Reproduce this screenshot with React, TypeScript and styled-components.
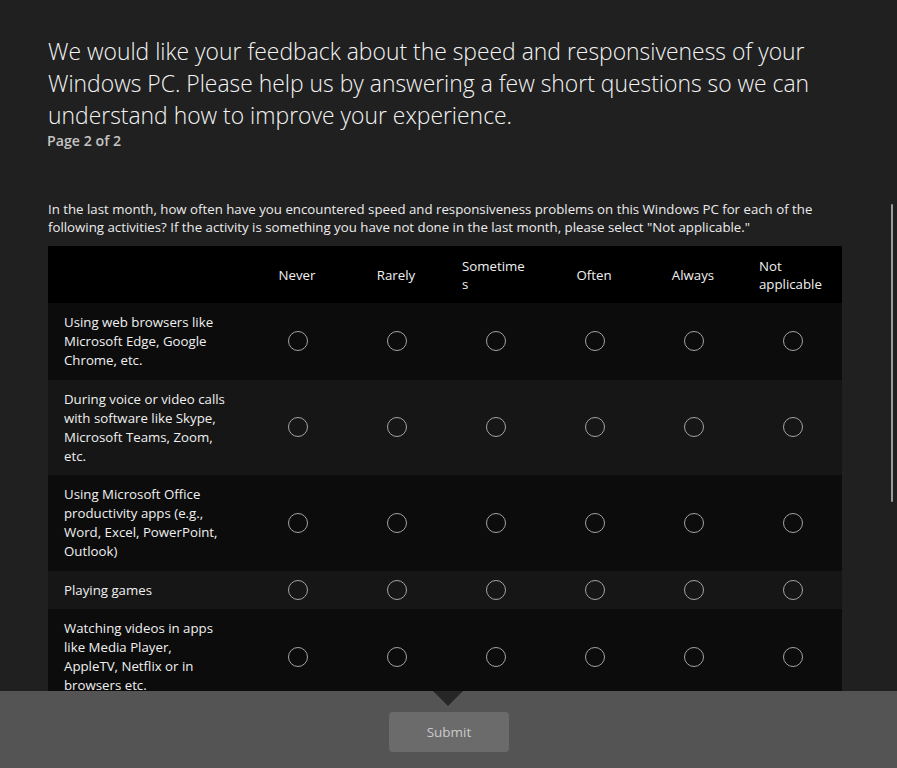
import React from "react";
import styled, { createGlobalStyle } from "styled-components";

const GlobalStyle = createGlobalStyle`
  html, body {
    margin: 0;
    padding: 0;
    background: #202020;
  }
  body {
    font-family: "Open Sans", "Noto Sans", "Liberation Sans", sans-serif;
    color: #f2f2f2;
  }
  * { box-sizing: border-box; }
`;

const Page = styled.div`
  position: relative;
  height: 768px;
  display: flex;
  flex-direction: column;
  overflow: hidden;
  background: #202020;
`;

const Scroller = styled.main`
  flex: 1;
  min-height: 0;
  overflow: hidden;
  padding: 36px 55px 0 48px;
`;

const Title = styled.h1`
  margin: 0;
  font-size: 22.9px;
  font-weight: 300;
  line-height: 32px;
  color: #f4f4f4;
`;

const PageLabel = styled.div`
  font-size: 14.2px;
  font-weight: 600;
  line-height: 18px;
  color: #c4c4c4;
  margin-left: -1px;
`;

const Question = styled.p`
  margin: 50px 0 10px;
  font-size: 13.25px;
  line-height: 18px;
  color: #ececec;
`;

const Table = styled.div`
  width: 794px;
  font-size: 13.25px;
  color: #f0f0f0;
`;

const Row = styled.div<{ $tone: "head" | "dark" | "light" }>`
  display: grid;
  grid-template-columns: 200px repeat(6, 99px);
  align-items: center;
  background: ${(p) =>
    p.$tone === "head" ? "#000000" : p.$tone === "dark" ? "#0c0c0c" : "#161616"};
  min-height: ${(p) => (p.$tone === "head" ? "57px" : "38px")};
`;

const HeadCell = styled.div`
  display: flex;
  justify-content: center;
  align-items: center;
  padding: 0 17px 0 16px;
  line-height: 18px;
`;

const HeadText = styled.span`
  overflow-wrap: anywhere;
  text-align: left;
`;

const Label = styled.div`
  padding: 10px 20px 9.5px 16px;
  line-height: 19px;
`;

const RadioCell = styled.div`
  display: flex;
  justify-content: center;
  align-items: center;
`;

const Radio = styled.input.attrs({ type: "radio" })`
  appearance: none;
  margin: 0;
  width: 20px;
  height: 20px;
  border-radius: 50%;
  border: 1px solid #a3a3a3;
  background: transparent;
`;

const Footer = styled.footer`
  position: relative;
  height: 77px;
  flex-shrink: 0;
  background: #545454;
  display: flex;
  justify-content: center;
  align-items: flex-start;
  padding-top: 21px;
`;

const Pointer = styled.div`
  position: absolute;
  top: 0;
  left: 433px;
  width: 0;
  height: 0;
  border-left: 15.5px solid transparent;
  border-right: 15.5px solid transparent;
  border-top: 15px solid #262626;
`;

const SubmitButton = styled.button`
  width: 120px;
  height: 40px;
  margin-left: 1px;
  border: none;
  border-radius: 4px;
  background: #6b6b6b;
  color: #cacaca;
  font-family: inherit;
  font-size: 13.5px;
  cursor: default;
`;

const ScrollThumb = styled.div`
  position: absolute;
  left: 891px;
  top: 204px;
  width: 2px;
  height: 298px;
  border-radius: 1px;
  background: #9a9a9a;
`;

const columns = ["Never", "Rarely", "Sometimes", "Often", "Always", "Not applicable"];

const activities = [
  "Using web browsers like Microsoft Edge, Google Chrome, etc.",
  "During voice or video calls with software like Skype, Microsoft Teams, Zoom, etc.",
  "Using Microsoft Office productivity apps (e.g., Word, Excel, PowerPoint, Outlook)",
  "Playing games",
  "Watching videos in apps like Media Player, AppleTV, Netflix or in browsers etc.",
];

export default function App() {
  return (
    <>
      <GlobalStyle />
      <Page>
        <Scroller>
          <Title>
            We would like your feedback about the speed and responsiveness of your Windows PC.
            Please help us by answering a few short questions so we can understand how to improve
            your experience.
          </Title>
          <PageLabel>Page 2 of 2</PageLabel>
          <Question>
            In the last month, how often have you encountered speed and responsiveness problems on
            this Windows PC for each of the following activities? If the activity is something you
            have not done in the last month, please select "Not applicable."
          </Question>
          <Table role="table">
            <Row $tone="head" role="row">
              <div />
              {columns.map((c) => (
                <HeadCell key={c} role="columnheader">
                  <HeadText>{c}</HeadText>
                </HeadCell>
              ))}
            </Row>
            {activities.map((a, i) => (
              <Row key={a} $tone={i % 2 === 0 ? "dark" : "light"} role="row">
                <Label>{a}</Label>
                {columns.map((c) => (
                  <RadioCell key={c}>
                    <Radio name={`q${i}`} aria-label={c} />
                  </RadioCell>
                ))}
              </Row>
            ))}
          </Table>
        </Scroller>
        <Footer>
          <Pointer />
          <SubmitButton>Submit</SubmitButton>
        </Footer>
        <ScrollThumb />
      </Page>
    </>
  );
}
